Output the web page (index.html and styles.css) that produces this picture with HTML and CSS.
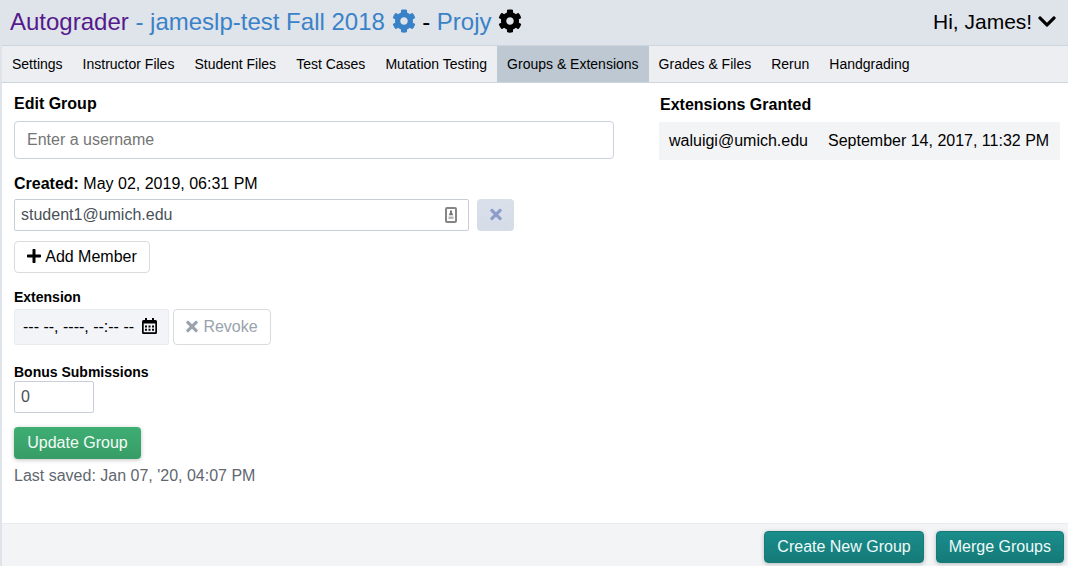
FILE: index.html
```
<!DOCTYPE html>
<html lang="en">
<head>
<meta charset="utf-8">
<title>Autograder</title>
<link rel="stylesheet" href="styles.css">
</head>
<body>
<svg class="sprite" aria-hidden="true">
  <symbol id="cog" viewBox="0 0 512 512"><path d="M487.4 315.7l-42.6-24.6c4.3-23.2 4.3-47 0-70.2l42.6-24.6c4.9-2.8 7.1-8.6 5.5-14-11.1-35.6-30-67.8-54.7-94.6-3.8-4.1-10-5.1-14.8-2.3L380.8 110c-17.9-15.4-38.5-27.3-60.8-35.1V25.8c0-5.6-3.9-10.5-9.4-11.7-36.7-8.2-74.3-7.8-109.2 0-5.5 1.2-9.4 6.1-9.4 11.7V75c-22.2 7.9-42.8 19.8-60.8 35.1L88.700 85.500c-4.900-2.800-11-1.900-14.800 2.300-24.700 26.700-43.600 58.900-54.700 94.600-1.700 5.400.6 11.200 5.500 14L67.300 221c-4.300 23.200-4.300 47 0 70.200l-42.600 24.600c-4.900 2.800-7.100 8.600-5.500 14 11.100 35.600 30 67.800 54.700 94.600 3.800 4.100 10 5.100 14.800 2.300l42.600-24.600c17.900 15.400 38.500 27.300 60.800 35.100v49.200c0 5.600 3.900 10.500 9.400 11.700 36.700 8.200 74.300 7.800 109.200 0 5.500-1.200 9.400-6.100 9.400-11.700v-49.200c22.200-7.900 42.800-19.800 60.800-35.100l42.600 24.600c4.900 2.800 11 1.900 14.800-2.300 24.700-26.700 43.600-58.900 54.700-94.600 1.500-5.500-.7-11.300-5.600-14.100zM256 336c-44.100 0-80-35.900-80-80s35.900-80 80-80 80 35.900 80 80-35.900 80-80 80z"/></symbol>
  <symbol id="chevron" viewBox="0 0 448 512"><path d="M207.029 381.476L12.686 187.132c-9.373-9.373-9.373-24.569 0-33.941l22.667-22.667c9.357-9.357 24.522-9.375 33.901-.04L224 284.505l154.745-154.021c9.379-9.335 24.544-9.317 33.901.04l22.667 22.667c9.373 9.373 9.373 24.569 0 33.941L240.971 381.476c-9.373 9.372-24.569 9.372-33.942 0z"/></symbol>
  <symbol id="plus" viewBox="0 0 448 512"><path d="M416 208H272V64c0-17.670-14.330-32-32-32h-32c-17.670 0-32 14.330-32 32v144H32c-17.670 0-32 14.330-32 32v32c0 17.670 14.330 32 32 32h144v144c0 17.670 14.330 32 32 32h32c17.670 0 32-14.330 32-32V304h144c17.670 0 32-14.330 32-32v-32c0-17.670-14.330-32-32-32z"/></symbol>
  <symbol id="times" viewBox="0 0 352 512"><path d="M242.720 256l100.070-100.070c12.280-12.280 12.280-32.190 0-44.480l-22.240-22.240c-12.280-12.280-32.190-12.280-44.480 0L176 189.280 75.930 89.210c-12.280-12.280-32.190-12.280-44.480 0L9.210 111.450c-12.280 12.280-12.280 32.190 0 44.480L109.280 256 9.210 356.070c-12.280 12.280-12.280 32.190 0 44.480l22.240 22.240c12.280 12.280 32.200 12.280 44.480 0L176 322.720l100.070 100.070c12.280 12.280 32.200 12.280 44.480 0l22.240-22.240c12.280-12.280 12.280-32.190 0-44.480L242.720 256z"/></symbol>
</svg>
<div class="app">
  <header class="topbar">
    <div class="crumbs"><a class="visited">Autograder</a><a class="link"> - jameslp-test Fall 2018 <svg class="cog"><use href="#cog"/></svg></a> - <a class="link">Projy</a> <svg class="cog"><use href="#cog"/></svg></div>
    <div class="greeting">Hi, James! <svg class="chevron"><use href="#chevron"/></svg></div>
  </header>
  <nav class="tabs">
    <a class="tab">Settings</a><a class="tab">Instructor Files</a><a class="tab">Student Files</a><a class="tab">Test Cases</a><a class="tab">Mutation Testing</a><a class="tab active">Groups &amp; Extensions</a><a class="tab">Grades &amp; Files</a><a class="tab">Rerun</a><a class="tab">Handgrading</a>
  </nav>
  <main class="content">
    <section class="edit">
      <h2 class="title">Edit Group</h2>
      <input class="search" type="text" placeholder="Enter a username">
      <div class="created"><b>Created:</b> May 02, 2019, 06:31 PM</div>
      <div class="member-row">
        <div class="field member">student1@umich.edu
          <svg class="autofill" viewBox="0 0 12 16"><rect x="1" y="1" width="10" height="14" rx="1" fill="#fff" stroke="#858585" stroke-width="2"/><path d="M5 3.500h2v2l1.300 2.700H3.700L5 5.500z" fill="#777"/><path d="M3.500 9.500h5v2.500h-5z" fill="#b5b5b5"/></svg>
        </div>
        <button class="btn remove"><svg class="times"><use href="#times"/></svg></button>
      </div>
      <button class="btn white add"><svg class="plus"><use href="#plus"/></svg>Add Member</button>
      <h3 class="label extension-label">Extension</h3>
      <div class="extension-row">
        <div class="datetime"><span>--- --, ----, --:-- --</span>
          <svg class="calendar" viewBox="0 0 15 17"><path fill-rule="evenodd" d="M3 0h2v2h5V0h2v2h1.500A1.500 1.500 0 0 1 15 3.500v11a1.500 1.500 0 0 1-1.500 1.500h-12A1.500 1.500 0 0 1 0 14.500v-11A1.500 1.500 0 0 1 1.500 2H3zM1.700 5.500v8.800h11.600V5.500z"/><path d="M3 7.500h2v2H3zM6.500 7.500h2v2h-2zM10 7.500h2v2h-2zM3 10.800h2v2H3zM6.500 10.800h2v2h-2zM10 10.800h2v2h-2z"/></svg>
        </div>
        <button class="btn white revoke"><svg class="times"><use href="#times"/></svg>Revoke</button>
      </div>
      <h3 class="label bonus-label">Bonus Submissions</h3>
      <div class="field bonus">0</div>
      <button class="btn green">Update Group</button>
      <div class="saved">Last saved: Jan 07, '20, 04:07 PM</div>
    </section>
    <section class="granted">
      <h2 class="title">Extensions Granted</h2>
      <div class="grant"><span>waluigi@umich.edu</span><span>September 14, 2017, 11:32 PM</span></div>
    </section>
  </main>
  <footer class="footer">
    <button class="btn teal">Create New Group</button>
    <button class="btn teal">Merge Groups</button>
  </footer>
</div>
</body>
</html>
```
FILE: styles.css
```
* { box-sizing: border-box; }
body { margin: 0; font: 16px/18px "Liberation Sans", Arial, sans-serif; color: #000; background: #fff; }
svg { fill: currentColor; flex: none; }
.sprite { display: none; }
.app { display: flex; flex-direction: column; height: 566px; border-left: 2px solid #dfe3ea; overflow: hidden; }
.topbar { display: flex; justify-content: space-between; height: 46px; padding: 0 12px 0 8px; background: #dfe3ea; border-bottom: 1px solid #cdd6df; }
.crumbs { font-size: 24px; line-height: 44px; white-space: pre; }
.visited { color: #551a8b; }
.link { color: #3a82c8; }
.cog { width: 24px; height: 24px; vertical-align: -3px; }
.greeting { font-size: 21px; line-height: 44px; white-space: pre; }
.chevron { width: 18px; height: 21px; vertical-align: -3px; }
.tabs { display: flex; height: 37px; background: #edeef2; border-bottom: 1px solid #cdd5df; font-size: 14px; line-height: 36px; }
.tab { padding: 0 10px; white-space: nowrap; }
.active { background: #bdc8d2; }
.content { display: flex; flex: 1; padding-left: 12px; }
.edit { width: 600px; display: flex; flex-direction: column; align-items: flex-start; padding-top: 12px; }
.title { margin: 0; font-size: 16px; line-height: 18px; }
.search { width: 600px; height: 38px; margin-top: 8px; padding: 0 12px 1px; border: 1px solid #cdd1dc; border-radius: 4px; font: inherit; background: #fff; }
.search::placeholder { color: #757575; }
.created { margin-top: 16px; }
.member-row { display: flex; gap: 8px; margin-top: 6px; }
.field { height: 32px; padding: 0 6px; border: 1px solid #c9cdd8; border-radius: 2px; line-height: 30px; color: #495057; }
.member { display: flex; align-items: center; justify-content: space-between; width: 455px; padding-right: 11px; }
.autofill { width: 12px; height: 16px; }
.btn { display: flex; align-items: center; justify-content: center; height: 32px; margin: 0; padding: 0 12px; border: 1px solid transparent; border-radius: 4px; font: inherit; white-space: nowrap; }
.remove { width: 37px; color: #8c9dca; background: linear-gradient(#d9e0ea, #d5dce8) border-box; }
.times { width: 12px; height: 17px; margin-bottom: 2px; }
.white { background: #fff; border-color: #d9dbdf; color: #000; }
.add { width: 136px; gap: 4px; margin-top: 10px; }
.plus { width: 14px; height: 16px; margin-bottom: 2px; }
.label { margin: 0; font-size: 14px; line-height: 16px; }
.extension-label { margin-top: 16px; }
.extension-row { display: flex; gap: 4px; margin-top: 4px; }
.datetime { display: flex; align-items: center; justify-content: space-between; width: 155px; height: 36px; padding: 0 11px 0 8px; background: #f3f4f7; border: 1px solid #e9ecef; border-radius: 2px; white-space: nowrap; }
.calendar { width: 15px; height: 17px; margin-bottom: 1px; }
.revoke { width: 98px; height: 36px; gap: 5px; color: #99a2ad; }
.bonus-label { margin-top: 19px; }
.bonus { width: 80px; margin-top: 1px; }
.green { width: 127px; margin-top: 14px; color: #f4fbf7; background: linear-gradient(#3eae73, #379c67) border-box; box-shadow: 0 1px 4px rgba(0,0,0,.25); }
.saved { margin-top: 8px; color: #5f6770; }
.granted { width: 401px; margin-left: 45px; padding-top: 13px; }
.granted .title { padding-left: 1px; }
.grant { display: flex; gap: 20px; height: 38px; margin-top: 8px; padding-left: 10px; background: #f3f4f6; line-height: 37px; white-space: nowrap; }
.footer { display: flex; justify-content: flex-end; gap: 12px; height: 43px; padding: 7px 4px 0 0; background: #f2f4f6; border-top: 1px solid #e9ebee; }
.teal { color: #eefafa; background: linear-gradient(#1a8d8b, #157a78); border: 1px solid #167c7a; box-shadow: 0 1px 4px rgba(0,0,0,.25); }
```
